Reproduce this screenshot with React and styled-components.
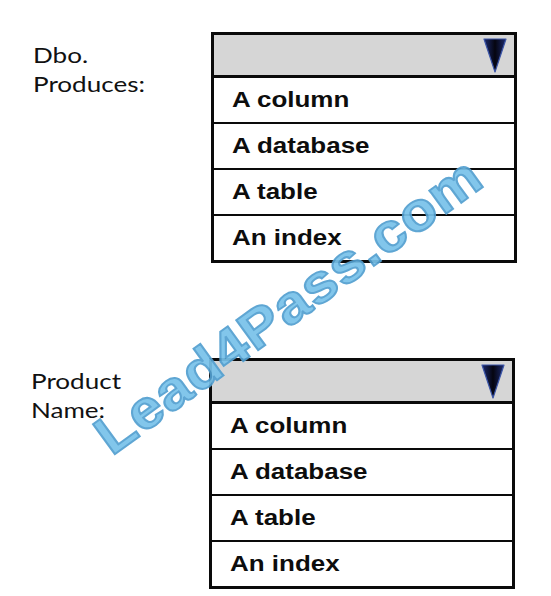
import React from "react";
import styled, { createGlobalStyle } from "styled-components";

const GlobalStyle = createGlobalStyle`
  html, body {
    margin: 0;
    padding: 0;
    background: #ffffff;
  }
`;

const Page = styled.div`
  position: relative;
  width: 551px;
  height: 596px;
  overflow: hidden;
  box-sizing: border-box;
  padding: 32px 0 0 33px;
  display: flex;
  flex-direction: column;
  gap: 95px;
`;

const Field = styled.div`
  display: flex;
  align-items: flex-start;
  margin-left: ${(p) => p.$shift || 0}px;
`;

const Label = styled.div`
  width: ${(p) => p.$width}px;
  flex: none;
  padding-top: 9px;
  font-family: Lato, "Open Sans", sans-serif;
  font-size: 21px;
  line-height: 28.5px;
  color: #111111;
`;

const Wide = styled.span`
  display: inline-block;
  white-space: nowrap;
  transform: scaleX(${(p) => p.$sx || 1.24});
  transform-origin: left center;
`;

const Dropdown = styled.div`
  width: 306px;
  box-sizing: border-box;
  border: 3px solid #0a0a0a;
  background: #ffffff;
  display: flex;
  flex-direction: column;
`;

const Header = styled.div`
  height: 43px;
  box-sizing: border-box;
  background: #d6d6d6;
  border-bottom: 3px solid #0a0a0a;
  display: flex;
  justify-content: flex-end;
  align-items: flex-start;
  padding: 3px 7px 0 0;
`;

const Option = styled.div`
  height: 44px;
  display: flex;
  align-items: center;
  padding-left: 18px;
  font-family: "Liberation Sans", Arial, sans-serif;
  font-weight: 700;
  font-size: 22px;
  color: #0d0d0d;

  & + & {
    border-top: 2px solid #0a0a0a;
  }
`;

const Watermark = styled.div`
  position: absolute;
  left: 288px;
  top: 305px;
  transform: translate(-50%, -50%) rotate(-36deg) scaleX(1.1);
  font-family: "Liberation Sans", Arial, sans-serif;
  font-weight: 700;
  font-size: 54px;
  letter-spacing: 1px;
  white-space: nowrap;
  color: #78c2ea;
  -webkit-text-stroke: 2px #529fd0;
  text-shadow: 0 0 2px #ffffff;
  opacity: 0.92;
  pointer-events: none;
`;

const Arrow = () => (
  <svg width="24" height="35" viewBox="0 0 24 35">
    <defs>
      <linearGradient id="arrowFill" x1="0" y1="0" x2="1" y2="0">
        <stop offset="0" stopColor="#1c2a6e" />
        <stop offset="0.5" stopColor="#05050f" />
        <stop offset="1" stopColor="#1c2a6e" />
      </linearGradient>
    </defs>
    <polygon
      points="1,1 23,1 12,34"
      fill="url(#arrowFill)"
      stroke="#3b55a8"
      strokeWidth="1.2"
      strokeLinejoin="round"
    />
  </svg>
);

const choices = ["A column", "A database", "A table", "An index"];

const Select = () => (
  <Dropdown>
    <Header>
      <Arrow />
    </Header>
    {choices.map((c) => (
      <Option key={c}>
        <Wide $sx={1.18}>{c}</Wide>
      </Option>
    ))}
  </Dropdown>
);

export default function App() {
  return (
    <>
      <GlobalStyle />
      <Page>
        <Field>
          <Label $width={178}>
            <Wide>Dbo.</Wide>
            <br />
            <Wide>Produces:</Wide>
          </Label>
          <Select />
        </Field>
        <Field $shift={-2}>
          <Label $width={178}>
            <Wide>Product</Wide>
            <br />
            <Wide>Name:</Wide>
          </Label>
          <Select />
        </Field>
        <Watermark>Lead4Pass.com</Watermark>
      </Page>
    </>
  );
}
